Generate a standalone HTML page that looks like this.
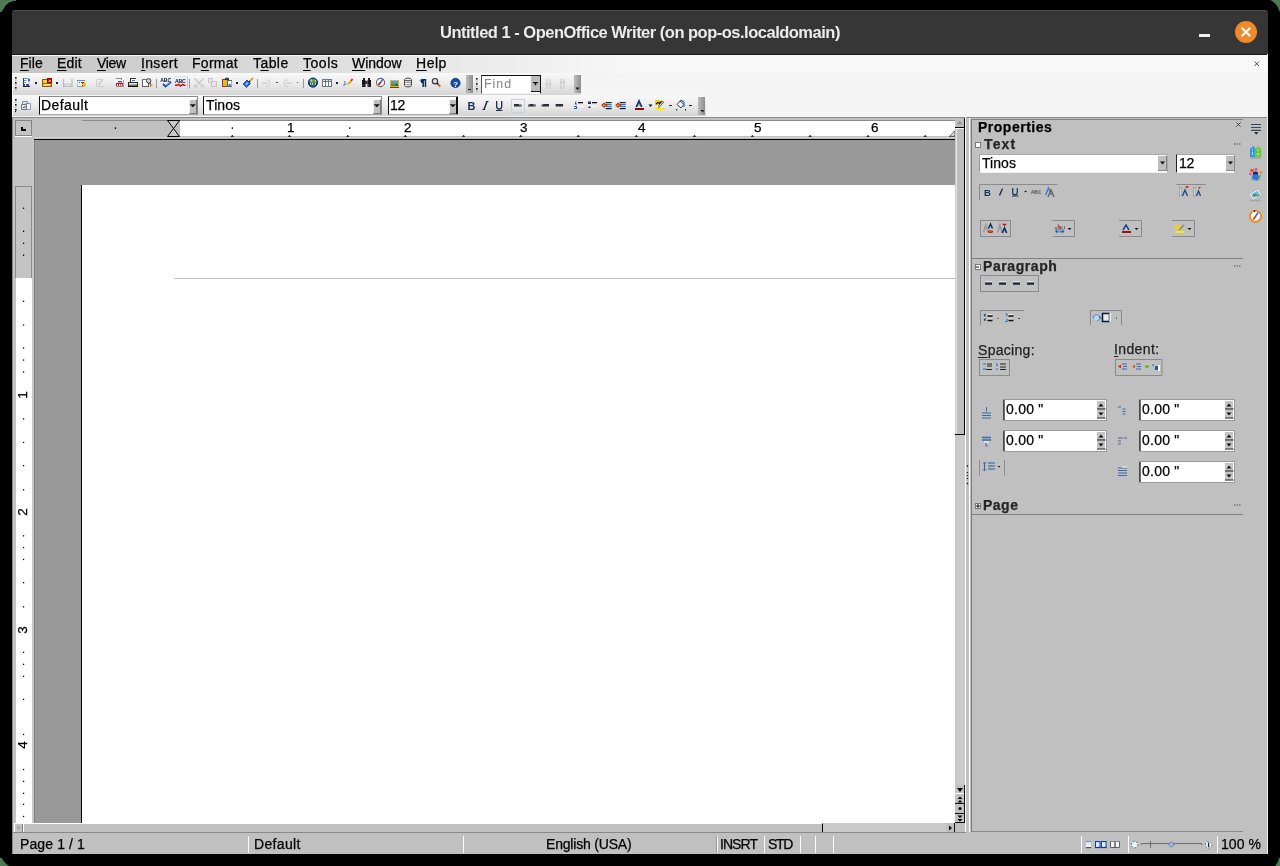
<!DOCTYPE html><html><head><meta charset="utf-8"><style>
*{margin:0;padding:0;box-sizing:border-box}
html,body{width:1280px;height:866px;overflow:hidden;background:#4f7c55;font-family:"Liberation Sans",sans-serif}
.abs{position:absolute}
.t{position:absolute;white-space:nowrap;line-height:1;color:#000;will-change:transform;-webkit-text-stroke:0.25px currentColor}
u{text-decoration:underline;text-underline-offset:2px;text-decoration-thickness:1px}
</style></head><body>
<div class="abs" style="left:0px;top:0px;width:1280px;height:866px;background:#000"></div>
<svg class="abs" style="left:0px;top:0px;" width="1280" height="866" viewBox="0 0 1280 866"><g fill="#4d7a52"><path d="M0 0H16V1H12V2H9.5L7.5 4L5.5 5.5L4.5 7.5L3.5 9L2.5 10.5L1.5 12H0Z"/><path d="M1270 0H1280V12L1278.5 9L1277.5 6.5L1276 4.5L1274 2.5L1272 1Z"/><path d="M0 858H2L3 860.5L5 862.5L7 864.5L9 866H0Z"/><path d="M1280 858V866H1275L1276.5 864L1278 861.5L1279 858Z"/></g></svg>
<div class="abs" style="left:12px;top:54px;width:1256px;height:800px;background:#c0c0c0"></div>
<div class="abs" style="left:12px;top:10px;width:1256px;height:45px;background:#363636;border-radius:3px 3px 0 0;border-top:1px solid #4c4c4c"></div>
<div class="abs" style="left:12px;top:54px;width:1256px;height:1px;background:#1c1c1c"></div>
<div class="t" style="left:439.50px;top:24.03px;font-size:16.5px;font-weight:bold;color:#ececec;letter-spacing:-0.500px;-webkit-text-stroke:0">Untitled 1 - OpenOffice Writer (on pop-os.localdomain)</div>
<div class="abs" style="left:1199px;top:34px;width:11px;height:3px;background:#f2f2f2"></div>
<div class="abs" style="left:1235px;top:21px;width:22px;height:22px;border-radius:50%;background:#ef8a2b"></div>
<svg class="abs" style="left:1235px;top:21px;" width="22" height="22" viewBox="0 0 22 22"><path d="M7.5 7.5L14.5 14.5M14.5 7.5L7.5 14.5" stroke="#f6f8fa" stroke-width="2.2" stroke-linecap="square"/></svg>
<div class="abs" style="left:12px;top:55px;width:1256px;height:18px;background:linear-gradient(90deg,#c4c4c4 0%,#f8f8f8 50%,#f8f8f8 100%);border-top:1px solid #fafafa"></div>
<div class="t" style="left:19.70px;top:56.15px;font-size:14px;color:#000;letter-spacing:0.033px;"><u>F</u>ile</div>
<div class="t" style="left:56.90px;top:56.15px;font-size:14px;color:#000;letter-spacing:0.133px;"><u>E</u>dit</div>
<div class="t" style="left:96.60px;top:56.15px;font-size:14px;color:#000;letter-spacing:-0.333px;"><u>V</u>iew</div>
<div class="t" style="left:140.80px;top:56.15px;font-size:14px;color:#000;letter-spacing:0.340px;"><u>I</u>nsert</div>
<div class="t" style="left:192.20px;top:56.15px;font-size:14px;color:#000;letter-spacing:0.280px;">F<u>o</u>rmat</div>
<div class="t" style="left:252.80px;top:56.15px;font-size:14px;color:#000;letter-spacing:0.425px;">T<u>a</u>ble</div>
<div class="t" style="left:302.50px;top:56.15px;font-size:14px;color:#000;letter-spacing:0.525px;"><u>T</u>ools</div>
<div class="t" style="left:351.60px;top:56.15px;font-size:14px;color:#000;letter-spacing:-0.040px;"><u>W</u>indow</div>
<div class="t" style="left:415.80px;top:56.15px;font-size:14px;color:#000;letter-spacing:0.533px;"><u>H</u>elp</div>
<svg class="abs" style="left:1253px;top:60px;" width="8" height="8" viewBox="0 0 8 8"><path d="M1.5 1.5L6 6M6 1.5L1.5 6" stroke="#3a3a3a" stroke-width=".9"/></svg>
<div class="abs" style="left:12px;top:73px;width:1256px;height:44px;background:#f4f4f4"></div>
<div class="abs" style="left:13px;top:73px;width:568px;height:22px;background:linear-gradient(#f9f9f9,#ececec 45%,#d4d4d4)"></div>
<div class="abs" style="left:13px;top:95px;width:693px;height:21px;background:linear-gradient(#f9f9f9,#ececec 45%,#d4d4d4)"></div>
<svg class="abs" style="left:14.8px;top:76.8px;" width="2" height="15" viewBox="0 0 2 15"><rect x="0" y="0" width="1.6" height="1.6" fill="#111"/><rect x="0.2" y="2.5" width="1.2" height="1.2" fill="#9a9a9a"/><rect x="0" y="5" width="1.6" height="1.6" fill="#111"/><rect x="0.2" y="7.5" width="1.2" height="1.2" fill="#9a9a9a"/><rect x="0" y="10" width="1.6" height="1.6" fill="#111"/><rect x="0.2" y="12.5" width="1.2" height="1.2" fill="#9a9a9a"/></svg>
<svg class="abs" style="left:14.8px;top:98.7px;" width="2" height="15" viewBox="0 0 2 15"><rect x="0" y="0" width="1.6" height="1.6" fill="#111"/><rect x="0.2" y="2.5" width="1.2" height="1.2" fill="#9a9a9a"/><rect x="0" y="5" width="1.6" height="1.6" fill="#111"/><rect x="0.2" y="7.5" width="1.2" height="1.2" fill="#9a9a9a"/><rect x="0" y="10" width="1.6" height="1.6" fill="#111"/><rect x="0.2" y="12.5" width="1.2" height="1.2" fill="#9a9a9a"/></svg>
<div class="abs" style="left:14.8px;top:110.7px;width:1.6px;height:1.6px;background:#111"></div>
<svg class="abs" style="left:475.8px;top:78px;" width="2" height="15" viewBox="0 0 2 15"><rect x="0" y="0" width="1.6" height="1.6" fill="#111"/><rect x="0.2" y="2.5" width="1.2" height="1.2" fill="#9a9a9a"/><rect x="0" y="5" width="1.6" height="1.6" fill="#111"/><rect x="0.2" y="7.5" width="1.2" height="1.2" fill="#9a9a9a"/><rect x="0" y="10" width="1.6" height="1.6" fill="#111"/><rect x="0.2" y="12.5" width="1.2" height="1.2" fill="#9a9a9a"/></svg>
<div class="abs" style="left:34.8px;top:82px;width:2.3px;height:1.5px;background:#222"></div>
<div class="abs" style="left:55.8px;top:82px;width:2.3px;height:1.5px;background:#222"></div>
<div class="abs" style="left:156px;top:79px;width:1px;height:9px;background:#9a9a9a"></div>
<div class="abs" style="left:189px;top:79px;width:1px;height:9px;background:#9a9a9a"></div>
<div class="abs" style="left:236px;top:82px;width:2.3px;height:1.5px;background:#222"></div>
<div class="abs" style="left:257px;top:79px;width:1px;height:9px;background:#9a9a9a"></div>
<div class="abs" style="left:276px;top:82px;width:2.2px;height:1.2px;background:#555"></div>
<div class="abs" style="left:297px;top:82px;width:1.2px;height:1.2px;background:#555"></div>
<div class="abs" style="left:303px;top:79px;width:1px;height:9px;background:#9a9a9a"></div>
<div class="abs" style="left:335.7px;top:82px;width:2.3px;height:1.5px;background:#222"></div>
<svg class="abs" style="left:0px;top:0px;pointer-events:none" width="1280" height="866" viewBox="0 0 1280 866"><rect x="23" y="78" width="5" height="9" fill="#fff"/><rect x="23" y="78" width="1" height="9" fill="#1a3f7a"/><rect x="23" y="86" width="7" height="1" fill="#2a2a2a"/><rect x="24" y="78" width="3" height="1" fill="#7a8aa0"/><rect x="27" y="78" width="2" height="1" fill="#8fa8c8"/><rect x="28" y="79" width="2" height="2" fill="#3a6aa8"/><rect x="29" y="81" width="1" height="5" fill="#d8d8d8"/><rect x="24" y="80" width="1" height="1" fill="#5a7ab0"/><rect x="25" y="80" width="2" height="1" fill="#9ab0d0"/><rect x="24" y="82" width="2" height="1" fill="#7a90b0"/><rect x="26" y="84" width="3" height="2" fill="#2a5a98"/><rect x="24" y="84" width="1" height="2" fill="#1a3f7a"/><rect x="28" y="81" width="1" height="1" fill="#6a8ac0"/><rect x="42" y="79" width="5" height="8" fill="#a84a10"/><rect x="43" y="80" width="4" height="6" fill="#f8d820"/><rect x="42" y="83" width="10" height="4" fill="#a84a10"/><rect x="43" y="84" width="8" height="2" fill="#f8c820"/><rect x="44" y="84" width="6" height="1" fill="#fff4b0"/><rect x="47" y="78" width="5" height="5" fill="#900010"/><rect x="48" y="79" width="3" height="3" fill="#c01818"/><rect x="48" y="81" width="3" height="1" fill="#f08020"/><rect x="49" y="80" width="2" height="1" fill="#f8a040"/><path d="M63.5 79v7.5h8.5V79" fill="none" stroke="#b8b8b8" stroke-width="1.2"/><path d="M65 84h5.5v2.5h-5.5z" fill="none" stroke="#c0c0c0" stroke-width=".9"/><rect x="77" y="80" width="8" height="1" fill="#6a88b0"/><rect x="77" y="81" width="7" height="5" fill="#f6f8fa"/><rect x="77" y="86" width="7" height="1" fill="#9aa4b0"/><rect x="77" y="81" width="1" height="5" fill="#b8c8e0"/><rect x="79" y="82" width="1" height="1" fill="#444"/><rect x="81" y="82" width="1" height="1" fill="#444"/><rect x="82" y="82" width="3" height="4" fill="#a04010"/><rect x="83" y="83" width="3" height="3" fill="#f8d020"/><rect x="84" y="82" width="1" height="5" fill="#e8b020"/><rect x="82" y="84" width="4" height="1" fill="#f8c010"/><path d="M96.5 79.5h5M96.5 86.5h8M96.5 80v6" stroke="#d0d0d0" fill="none"/><path d="M98 85l5-5.5" stroke="#c8c8c8" stroke-width="1.3"/><rect x="116" y="78" width="6" height="1" fill="#7a8a9a"/><rect x="116" y="79" width="7" height="4" fill="#f4f6f8"/><rect x="123" y="80" width="1" height="7" fill="#9aa0a8"/><rect x="121" y="79" width="1" height="1" fill="#f06020"/><rect x="118" y="81" width="4" height="1.5" fill="#1a6ad0"/><rect x="116" y="83" width="7" height="3" fill="#e80010"/><rect x="117" y="84" width="1" height="2" fill="#fff"/><rect x="119" y="84" width="1.3" height="2" fill="#fff"/><rect x="121.3" y="84" width="1" height="2" fill="#fff"/><rect x="116" y="86" width="8" height="1" fill="#8a9098"/><rect x="130" y="78" width="6" height="1" fill="#333"/><rect x="130" y="78" width="1" height="4" fill="#333"/><rect x="131" y="79" width="5" height="3" fill="#f4f8fc"/><rect x="132" y="80" width="3" height="1" fill="#2a70d0"/><rect x="136" y="82" width="2" height="1" fill="#444"/><rect x="128" y="82" width="10" height="5" fill="#2a2a2a"/><rect x="129" y="83" width="8" height="2.5" fill="#b0b0b0"/><rect x="129" y="83" width="8" height="1" fill="#e8e8e8"/><rect x="135" y="84" width="2" height="1" fill="#7ac040"/><rect x="128" y="86" width="10" height="1" fill="#111"/><rect x="142" y="79" width="1" height="8" fill="#5a5f68"/><rect x="142" y="86" width="7" height="1" fill="#5a5f68"/><rect x="142" y="79" width="5" height="1" fill="#6a7080"/><rect x="143" y="80" width="5" height="6" fill="#fafafa"/><rect x="148" y="82" width="1" height="5" fill="#5a5f68"/><circle cx="148.7" cy="80.8" r="2.2" fill="#c8dcf0" stroke="#333" stroke-width=".9"/><rect x="149.5" y="83" width="1.5" height="1.5" fill="#6a3010"/><rect x="150.5" y="84" width="2" height="2" fill="#e8b020"/><rect x="150" y="85.5" width="1" height="1" fill="#222"/><text x="160.3" y="81.9" font-size="5.2" font-weight="bold" fill="#0a1a38" font-family="Liberation Sans" letter-spacing="-.2">ABC</text><path d="M163 84l2.5 2.5 5.5-4.5" fill="none" stroke="#1a50b0" stroke-width="1.9"/><path d="M166 85.5l4.5-3.5" stroke="#60b0f0" stroke-width=".8"/><rect x="174.5" y="76.5" width="13" height="13" fill="none" stroke="#dde3ee"/><path d="M187.5 77v12" stroke="#b8c8e8"/><text x="175" y="82.9" font-size="5.2" font-weight="bold" fill="#0a1a38" font-family="Liberation Sans" letter-spacing="-.2">ABC</text><path d="M175 85.2h2l1.5-.8 2 1.6 2-1.6 1.5.8h1.5" fill="none" stroke="#e80808" stroke-width="1.6"/><path d="M194.5 78.5l6.5 6M203.5 78.5l-6 6" stroke="#c6c6c6" stroke-width="1.1"/><circle cx="195.5" cy="86" r="1.2" fill="none" stroke="#c0c0c0"/><circle cx="202.5" cy="86" r="1.2" fill="none" stroke="#c0c0c0"/><rect x="208" y="78" width="5" height="5" fill="#c8c8c8"/><rect x="209" y="79" width="3" height="3" fill="#e6e6e6"/><rect x="211" y="81" width="6" height="6" fill="#c4c4c4"/><rect x="212" y="82" width="4" height="4" fill="#e4e4e4"/><rect x="222" y="79" width="6" height="8" fill="#8a4010"/><rect x="223" y="80" width="4" height="6" fill="#f0b820"/><rect x="225" y="78" width="4" height="2" fill="#333"/><rect x="226" y="77.5" width="2" height="1" fill="#777"/><rect x="227" y="80" width="5" height="7" fill="#5a6470"/><rect x="228" y="81" width="3.5" height="5" fill="#f8f8f8"/><rect x="228.5" y="84" width="2" height="2" fill="#1a70d0"/><path d="M243 84l4-4 3.5 3.5-4 4z" fill="#2060d0" stroke="#0a3a90" stroke-width=".7"/><path d="M245 84l2-2 1.5 1.5-2 2z" fill="#80c0f8"/><path d="M249.5 81.5l3.5-3.5" stroke="#e09010" stroke-width="1.7"/><path d="M249 82l1-1" stroke="#222" stroke-width="1.2"/><path d="M262.5 83.2h5" stroke="#c8c8c8" stroke-width="1.2"/><path d="M266 80a3.3 3.3 0 1 1 0 6.5" fill="none" stroke="#c4c4c4" stroke-width="1.1" stroke-dasharray="1.3 .7"/><path d="M286.5 83.2h5" stroke="#c8c8c8" stroke-width="1.2"/><path d="M288 80a3.3 3.3 0 1 0 0 6.5" fill="none" stroke="#c4c4c4" stroke-width="1.1" stroke-dasharray="1.3 .7"/><circle cx="313" cy="82.6" r="4.6" fill="#1a6a9a" stroke="#0a2a5a" stroke-width="1"/><rect x="310" y="79.5" width="6" height="3" fill="#6ab83a"/><rect x="310.5" y="79.5" width="1.5" height="2" fill="#e8d020"/><rect x="313" y="79" width="1" height="3.5" fill="#3a8ad8"/><rect x="315" y="80" width="1" height="2" fill="#e8d020"/><rect x="309.5" y="83" width="7" height="2.2" fill="#111"/><rect x="310" y="83.2" width="1.5" height="1.5" fill="#fff"/><rect x="312" y="83.2" width="1.5" height="1.5" fill="#fff"/><rect x="314.5" y="83.2" width="1.5" height="1.5" fill="#fff"/><rect x="312.5" y="85.5" width="1" height="1" fill="#1a80e0"/><rect x="322" y="79" width="10" height="8" fill="#6a7888"/><rect x="323" y="80" width="2" height="1" fill="#dde4ec"/><rect x="326" y="80" width="2" height="1" fill="#dde4ec"/><rect x="329" y="80" width="2" height="1" fill="#dde4ec"/><rect x="323" y="82" width="2" height="4" fill="#fff"/><rect x="326" y="82" width="2" height="4" fill="#fff"/><rect x="329" y="82" width="2" height="4" fill="#fff"/><path d="M343.5 85.5l2-2M344 81.5l1.5 1" stroke="#2a7ad8" stroke-width="1.1"/><path d="M346 86l5.5-5.5" stroke="#f0d020" stroke-width="2"/><path d="M346 86.5l1.5-1.5" stroke="#e8e8e8" stroke-width="1.5"/><path d="M351 81l1.5-2" stroke="#e02010" stroke-width="1.8"/><path d="M349 83.5l1.5-1.5" stroke="#5a3010" stroke-width=".8"/><rect x="362" y="80" width="3.5" height="7" fill="#181818"/><rect x="367.5" y="80" width="3.5" height="7" fill="#181818"/><rect x="363" y="78" width="2" height="2" fill="#222"/><rect x="368" y="78" width="2" height="2" fill="#222"/><rect x="365" y="81" width="2.5" height="3" fill="#333"/><rect x="362.5" y="84.5" width="1" height="1.5" fill="#666"/><rect x="368" y="84.5" width="1" height="1.5" fill="#666"/><circle cx="380.5" cy="82.5" r="4.1" fill="#f8f8f8" stroke="#6a6a6a" stroke-width="1.1"/><path d="M378.3 85l2.6-3" stroke="#d01010" stroke-width="1.7"/><path d="M380.8 82l2.4-3" stroke="#2a60c0" stroke-width="1.3"/><rect x="390" y="80" width="9" height="8" fill="#e8b030"/><rect x="391" y="81" width="7" height="2.5" fill="#4aa0e8"/><rect x="391" y="83.5" width="7" height="2.5" fill="#3a9a2a"/><rect x="390" y="87" width="9" height="1" fill="#7a3a10"/><rect x="396" y="84" width="1.5" height="1.5" fill="#1a3a1a"/><path d="M404.5 79.5v6a3.5 1.4 0 0 0 7 0v-6" fill="#dcdcdc" stroke="#4a4a4a" stroke-width="1"/><ellipse cx="408" cy="79.5" rx="3.5" ry="1.3" fill="#f0f0f0" stroke="#4a4a4a" stroke-width="1"/><path d="M406 82v4" stroke="#fff" stroke-width="1.2"/><path d="M405 82.5h6M405 84.5h6" stroke="#8a8a8a" stroke-width=".6"/><path d="M421.5 79h4.7v8h-1.5v-6.5h-.8v6.5h-1.5v-3.8a2.4 2.4 0 0 1-.9-4.2z" fill="#0a2a5a"/><path d="M420 81a1.5 1.5 0 0 1 2-1.5" stroke="#3a6ac0" fill="none"/><circle cx="435" cy="81.2" r="2.7" fill="#c8e0f8" stroke="#333" stroke-width="1.1"/><path d="M437.3 83.5l3 3" stroke="#c87010" stroke-width="2"/><path d="M437 83.3l.8.8" stroke="#222" stroke-width="1.5"/><circle cx="455.5" cy="83" r="4.7" fill="#1a4e9e"/><circle cx="455.5" cy="83" r="4.7" fill="none" stroke="#0a2a6a" stroke-width=".6"/><text x="453.2" y="86.5" font-size="7.8" font-weight="bold" fill="#fff" font-family="Liberation Sans">?</text></svg>
<div class="abs" style="left:466px;top:75px;width:7px;height:18px;background:linear-gradient(90deg,#bdbdbd,#8e8e8e)"></div>
<div class="abs" style="left:468px;top:89px;width:3px;height:1.2px;background:#222"></div>
<div class="abs" style="left:481px;top:74.5px;width:60px;height:19px;background:#fff;border-top:1.5px solid #111;border-left:1px solid #555;border-right:1.3px solid #111;border-bottom:1px solid #f4f4f4"></div>
<div class="t" style="left:483.60px;top:77.59px;font-size:12.3px;color:#8a8a8a;letter-spacing:1.033px;-webkit-text-stroke:0.1px #8a8a8a">Find</div>
<div class="abs" style="left:531px;top:76px;width:9px;height:16px;background:#bcbcbc;border-bottom:1px solid #111"></div>
<svg class="abs" style="left:531px;top:80px;" width="9" height="7" viewBox="0 0 9 7"><path d="M2 2.6h5M4.5 2.6v2.6" stroke="#111" stroke-width="1.4"/></svg>
<svg class="abs" style="left:544px;top:77px;" width="24" height="14" viewBox="0 0 24 14"><path d="M3 2v10M6 2v10M1.5 7h6" stroke="#c8c8c8" stroke-width="1.1"/><path d="M17 2v10M20 2v10M15.5 5.5h6" stroke="#c8c8c8" stroke-width="1.1"/></svg>
<div class="abs" style="left:574px;top:75px;width:7px;height:18px;background:linear-gradient(90deg,#bdbdbd,#8e8e8e)"></div>
<svg class="abs" style="left:575px;top:87px;" width="5" height="4" viewBox="0 0 5 4"><path d="M0.5 0.5h4L2.5 3z" fill="#111"/></svg>
<div class="abs" style="left:38.6px;top:96px;width:159.4px;height:18.6px;background:#fff;border-top:1px solid #8a8a8a;border-left:1.4px solid #111;border-right:1px solid #8a8a8a;border-bottom:1px solid #a8a8a8"></div>
<div class="t" style="left:40.50px;top:98.15px;font-size:14px;color:#000;letter-spacing:0.417px;">Default</div>
<div class="abs" style="left:188.5px;top:99px;width:8.5px;height:15px;background:#c0c0c0;border-right:1px solid #7a7a7a;border-bottom:1px solid #7a7a7a;border-top:1px solid #f8f8f8;border-left:1px solid #f0f0f0"></div>
<svg class="abs" style="left:189px;top:103.5px;" width="8" height="4" viewBox="0 0 8 4"><path d="M1.2 0.6h5.2L4.2 2.8h-0.8z" fill="#111" stroke="#111" stroke-width=".5"/></svg>
<div class="abs" style="left:202.6px;top:96px;width:179.4px;height:18.6px;background:#fff;border-top:1px solid #8a8a8a;border-left:1.4px solid #111;border-right:1px solid #8a8a8a;border-bottom:1px solid #a8a8a8"></div>
<div class="t" style="left:206.00px;top:98.15px;font-size:14px;color:#000;letter-spacing:0.100px;">Tinos</div>
<div class="abs" style="left:372.5px;top:99px;width:8.5px;height:15px;background:#c0c0c0;border-right:1px solid #7a7a7a;border-bottom:1px solid #7a7a7a;border-top:1px solid #f8f8f8;border-left:1px solid #f0f0f0"></div>
<svg class="abs" style="left:373px;top:103.5px;" width="8" height="4" viewBox="0 0 8 4"><path d="M1.2 0.6h5.2L4.2 2.8h-0.8z" fill="#111" stroke="#111" stroke-width=".5"/></svg>
<div class="abs" style="left:387.6px;top:96px;width:70.4px;height:18.6px;background:#fff;border-top:1px solid #8a8a8a;border-left:1.4px solid #111;border-right:1px solid #8a8a8a;border-bottom:1px solid #a8a8a8"></div>
<div class="t" style="left:389.80px;top:98.15px;font-size:14px;color:#000;letter-spacing:-0.400px;">12</div>
<div class="abs" style="left:448.5px;top:99px;width:8.5px;height:15px;background:#c0c0c0;border-right:1px solid #7a7a7a;border-bottom:1px solid #7a7a7a;border-top:1px solid #f8f8f8;border-left:1px solid #f0f0f0"></div>
<svg class="abs" style="left:449px;top:103.5px;" width="8" height="4" viewBox="0 0 8 4"><path d="M1.2 0.6h5.2L4.2 2.8h-0.8z" fill="#111" stroke="#111" stroke-width=".5"/></svg>
<div class="abs" style="left:456px;top:97px;width:2px;height:17px;background:#111"></div>
<svg class="abs" style="left:648px;top:104px;" width="5" height="4" viewBox="0 0 5 4"><path d="M0.5 0.5h4L2.5 3z" fill="#111"/></svg>
<div class="abs" style="left:669.3px;top:104.5px;width:2.6px;height:1.5px;background:#222"></div>
<div class="abs" style="left:689.3px;top:104.5px;width:2.6px;height:1.5px;background:#222"></div>
<svg class="abs" style="left:0px;top:0px;pointer-events:none" width="1280" height="866" viewBox="0 0 1280 866"><path d="M22.5 101.5h5v4h-5z" fill="#e8ecf0" stroke="#7a8aa0"/><path d="M25.5 103.5h5v6h-5z" fill="#f4f6f8" stroke="#8a9ab0"/><path d="M21.5 104.5h5v5h-5z" fill="#e0e4ea" stroke="#6a7a90"/><path d="M23 107l1 1 1.5-2" fill="none" stroke="#333" stroke-width=".8"/><text x="467.5" y="109.6" font-size="11" font-weight="bold" fill="#1a3050" font-family="Liberation Sans">B</text><path d="M484 109.5l3-8" stroke="#1a3050" stroke-width="1.6"/><path d="M482.5 109.5h2.5M486 101.5h2.5" stroke="#1a3050" stroke-width="1"/><path d="M496.7 101v5.5a2.5 2.5 0 0 0 5 0v-5.5" fill="none" stroke="#1a3050" stroke-width="1.3"/><path d="M496 110.5h6.5" stroke="#1a3050" stroke-width="1"/><rect x="511.5" y="99.5" width="13" height="13" fill="none" stroke="#c4d0e4"/><rect x="514" y="104" width="7.5" height="2.5" fill="#2a2f38"/><rect x="528" y="104" width="7.5" height="2.5" fill="#2a2f38"/><rect x="541.5" y="104" width="7.5" height="2.5" fill="#2a2f38"/><rect x="555.6" y="104" width="7.5" height="2.5" fill="#2a2f38"/><path d="M519 104.8h2.5M528 104.8h1.5M533.5 104.8h1.5M541.5 104.8h1.5" stroke="#ececec" stroke-width=".9"/><rect x="575" y="102" width="1" height="2.5" fill="#2a5aa8"/><rect x="575.5" y="101.5" width="1" height="0.8" fill="#2a5aa8"/><rect x="576" y="103.5" width="1" height="1" fill="#2a5aa8"/><rect x="574" y="106" width="3" height="1" fill="#2a5aa8"/><rect x="576" y="106" width="1" height="2" fill="#2a5aa8"/><rect x="574" y="108" width="3" height="1" fill="#2a5aa8"/><rect x="578" y="102" width="5" height="1.3" fill="#111"/><rect x="578" y="106" width="5" height="1" fill="#f8f8f8"/><rect x="588" y="101.5" width="3" height="2.5" fill="#0a2a5a"/><rect x="589" y="102" width="1" height="1" fill="#4a7ac0"/><path d="M588 108l1.5-2 1.5 2z" fill="#0a2a5a"/><rect x="592" y="102" width="5" height="1.3" fill="#111"/><rect x="592" y="106" width="5" height="1" fill="#f8f8f8"/><rect x="605.7" y="102" width="6" height="1.2" fill="#222"/><rect x="606.7" y="104" width="5" height="1.2" fill="#2a7ad8"/><rect x="606.7" y="106" width="5" height="1.2" fill="#2a7ad8"/><rect x="605.7" y="108" width="6" height="1.2" fill="#0a1a38"/><path d="M601.7 105.2l2.5-2.2v1.2h2.5v2h-2.5v1.2z" fill="#e8a020" stroke="#a01010" stroke-width=".9"/><rect x="619.7" y="102" width="6" height="1.2" fill="#222"/><rect x="620.7" y="104" width="5" height="1.2" fill="#2a7ad8"/><rect x="620.7" y="106" width="5" height="1.2" fill="#2a7ad8"/><rect x="619.7" y="108" width="6" height="1.2" fill="#0a1a38"/><path d="M615.7 105.2l2.5-2.2v1.2h2.5v2h-2.5v1.2z" fill="#e8a020" stroke="#a01010" stroke-width=".9"/><path d="M636.3 107l2.7-6 2.7 6" fill="none" stroke="#0a2a5a" stroke-width="1.7"/><path d="M637.5 105h3" stroke="#3a7ac0" stroke-width="1"/><rect x="638" y="100" width="2" height="1.5" fill="#2a5aa8"/><rect x="635" y="108" width="9" height="2" fill="#8a0808"/><rect x="655" y="100" width="7" height="5" fill="#f8d010"/><path d="M656 104l2-1.5 1.5 1 2-2" stroke="#111" stroke-width="1.2" fill="none"/><path d="M659 106l4.5-4.5" stroke="#555" stroke-width="2"/><path d="M659.3 105.7l4-4" stroke="#eee" stroke-width=".9"/><path d="M658 107h2" stroke="#c04010" stroke-width="1"/><rect x="655" y="108" width="10" height="2" fill="#f8f000"/><path d="M677 104.5l3-3.5 4 3.5-3 3.5z" fill="#f0f0f0" stroke="#333" stroke-width=".9"/><path d="M679.5 101.5a2 2 0 0 1 2.5-1" fill="none" stroke="#333" stroke-width=".9"/><path d="M682 101a2 2 0 0 1 2 2v4" fill="none" stroke="#2a7ad8" stroke-width="1.3"/><rect x="676.2" y="109" width="1" height="1.5" fill="#111"/><rect x="685" y="109" width="1" height="1.5" fill="#111"/></svg>
<div class="abs" style="left:698px;top:97px;width:7px;height:18px;background:linear-gradient(90deg,#bdbdbd,#8e8e8e)"></div>
<svg class="abs" style="left:700px;top:110px;" width="4" height="3" viewBox="0 0 4 3"><path d="M0 0h3.5L3.5 2.5z" fill="#111"/></svg>
<div class="abs" style="left:12px;top:117px;width:953px;height:22px;background:#c0c0c0"></div>
<div class="abs" style="left:12px;top:117px;width:953px;height:1px;background:#8a8a8a"></div>
<div class="abs" style="left:12px;top:117px;width:1px;height:737px;background:#8a8a8a"></div>
<div class="abs" style="left:15px;top:120px;width:17px;height:16px;background:#c4c4c4;border:1px solid #858585"></div>
<div class="abs" style="left:15px;top:135.5px;width:17px;height:1.5px;background:#fff"></div>
<div class="abs" style="left:21px;top:127px;width:2px;height:3px;background:#000"></div>
<div class="abs" style="left:21px;top:129px;width:5px;height:1.5px;background:#000"></div>
<div class="abs" style="left:34px;top:120px;width:921px;height:16.5px;background:#c0c0c0"></div>
<div class="abs" style="left:34px;top:136.5px;width:921px;height:1.5px;background:#d0d0d0"></div>
<div class="abs" style="left:82px;top:120px;width:873px;height:1px;background:#8a8a8a"></div>
<div class="abs" style="left:180px;top:121px;width:775px;height:15px;background:#fff"></div>
<div class="abs" style="left:34px;top:139px;width:921px;height:1.2px;background:#000"></div>
<svg class="abs" style="left:0px;top:0px;pointer-events:none" width="1280" height="866" viewBox="0 0 1280 866"><path d="M230.5 136.8h3.6l-1.8-1.8z" fill="#000"/><path d="M287.7 136.8h3.6l-1.8-1.8z" fill="#000"/><path d="M346.0 136.8h3.6l-1.8-1.8z" fill="#000"/><path d="M403.6 136.8h3.6l-1.8-1.8z" fill="#000"/><path d="M461.8 136.8h3.6l-1.8-1.8z" fill="#000"/><path d="M519.0 136.8h3.6l-1.8-1.8z" fill="#000"/><path d="M576.4 136.8h3.6l-1.8-1.8z" fill="#000"/><path d="M634.6 136.8h3.6l-1.8-1.8z" fill="#000"/><path d="M692.7 136.8h3.6l-1.8-1.8z" fill="#000"/><path d="M750.6 136.8h3.6l-1.8-1.8z" fill="#000"/><path d="M808.3 136.8h3.6l-1.8-1.8z" fill="#000"/><path d="M866.2 136.8h3.6l-1.8-1.8z" fill="#000"/><path d="M923.4 136.8h3.6l-1.8-1.8z" fill="#000"/><rect x="114.8" y="127.3" width="1.3" height="1.6" fill="#000"/><rect x="231.7" y="127.3" width="1.3" height="1.6" fill="#000"/><rect x="349.1" y="127.3" width="1.3" height="1.6" fill="#000"/><path d="M167.5 120.5h12l-6 8 6 8h-12l6-8z" fill="#c8c8c8" stroke="#000" stroke-width="1"/><path d="M949.5 136.5h5.5v-6z" fill="#d0d0d0" stroke="#000" stroke-width=".9" stroke-dasharray="1.2 .8"/></svg>
<div class="t" style="left:286.60px;top:120.57px;font-size:13.5px;color:#000;letter-spacing:0.000px;">1</div>
<div class="t" style="left:404.00px;top:120.57px;font-size:13.5px;color:#000;letter-spacing:0.000px;">2</div>
<div class="t" style="left:520.00px;top:120.57px;font-size:13.5px;color:#000;letter-spacing:0.000px;">3</div>
<div class="t" style="left:637.90px;top:120.57px;font-size:13.5px;color:#000;letter-spacing:0.000px;">4</div>
<div class="t" style="left:754.00px;top:120.57px;font-size:13.5px;color:#000;letter-spacing:0.000px;">5</div>
<div class="t" style="left:871.30px;top:120.57px;font-size:13.5px;color:#000;letter-spacing:0.000px;">6</div>
<div class="abs" style="left:34px;top:139px;width:921px;height:684px;background:#999"></div>
<div class="abs" style="left:34px;top:139px;width:1px;height:684px;background:#808080"></div>
<div class="abs" style="left:34px;top:139px;width:921px;height:1.2px;background:#000"></div>
<div class="abs" style="left:81px;top:185px;width:874px;height:638px;background:#fff"></div>
<div class="abs" style="left:81px;top:185px;width:1.2px;height:638px;background:#000"></div>
<div class="abs" style="left:174px;top:278px;width:781px;height:1px;background:#c0c0c0"></div>
<div class="abs" style="left:13px;top:139px;width:21px;height:684px;background:#c4c4c4"></div>
<div class="abs" style="left:12px;top:139px;width:1px;height:684px;background:#8a8a8a"></div>
<div class="abs" style="left:15px;top:186px;width:17px;height:92px;background:#c4c4c4;border-top:1px solid #8a8a8a;border-left:1px solid #8a8a8a;border-right:1px solid #8a8a8a"></div>
<div class="abs" style="left:16px;top:278px;width:16px;height:545px;background:#fff"></div>
<div class="abs" style="left:32px;top:139px;width:2px;height:684px;background:#c8c8c8"></div>
<svg class="abs" style="left:0px;top:0px;pointer-events:none" width="1280" height="866" viewBox="0 0 1280 866"><rect x="22.9" y="207.6" width="1.3" height="1.3" fill="#000"/><rect x="22.9" y="230.7" width="1.3" height="1.3" fill="#000"/><rect x="22.9" y="242.7" width="1.3" height="1.3" fill="#000"/><rect x="22.9" y="254.6" width="1.3" height="1.3" fill="#000"/><rect x="22.9" y="300.7" width="1.3" height="1.3" fill="#000"/><rect x="22.9" y="324.4" width="1.3" height="1.3" fill="#000"/><rect x="22.9" y="347.4" width="1.3" height="1.3" fill="#000"/><rect x="22.9" y="359.4" width="1.3" height="1.3" fill="#000"/><rect x="22.9" y="371.4" width="1.3" height="1.3" fill="#000"/><rect x="22.9" y="418.2" width="1.3" height="1.3" fill="#000"/><rect x="22.9" y="441.8" width="1.3" height="1.3" fill="#000"/><rect x="22.9" y="465.0" width="1.3" height="1.3" fill="#000"/><rect x="22.9" y="489.2" width="1.3" height="1.3" fill="#000"/><rect x="22.9" y="535.2" width="1.3" height="1.3" fill="#000"/><rect x="22.9" y="546.9" width="1.3" height="1.3" fill="#000"/><rect x="22.9" y="558.8" width="1.3" height="1.3" fill="#000"/><rect x="22.9" y="582.0" width="1.3" height="1.3" fill="#000"/><rect x="22.9" y="606.2" width="1.3" height="1.3" fill="#000"/><rect x="22.9" y="651.7" width="1.3" height="1.3" fill="#000"/><rect x="22.9" y="663.7" width="1.3" height="1.3" fill="#000"/><rect x="22.9" y="675.7" width="1.3" height="1.3" fill="#000"/><rect x="22.9" y="698.7" width="1.3" height="1.3" fill="#000"/><rect x="22.9" y="733.8" width="1.3" height="1.3" fill="#000"/><rect x="22.9" y="768.9" width="1.3" height="1.3" fill="#000"/><rect x="22.9" y="780.8" width="1.3" height="1.3" fill="#000"/><rect x="22.9" y="792.7" width="1.3" height="1.3" fill="#000"/><rect x="22.9" y="803.7" width="1.3" height="1.3" fill="#000"/><rect x="22.9" y="815.8" width="1.3" height="1.3" fill="#000"/></svg>
<div class="t" style="left:15.5px;top:387.8px;width:14px;height:14px;font-size:13.5px;line-height:14px;text-align:center;transform:rotate(-90deg)">1</div>
<div class="t" style="left:15.5px;top:504.9px;width:14px;height:14px;font-size:13.5px;line-height:14px;text-align:center;transform:rotate(-90deg)">2</div>
<div class="t" style="left:15.5px;top:622.6px;width:14px;height:14px;font-size:13.5px;line-height:14px;text-align:center;transform:rotate(-90deg)">3</div>
<div class="t" style="left:15.5px;top:738.4px;width:14px;height:14px;font-size:13.5px;line-height:14px;text-align:center;transform:rotate(-90deg)">4</div>
<div class="abs" style="left:955px;top:117px;width:10px;height:706px;background:#cacaca"></div>
<div class="abs" style="left:955px;top:117px;width:10px;height:1px;background:#8a8a8a"></div>
<div class="abs" style="left:955.5px;top:118px;width:8.5px;height:9px;background:#c0c0c0"></div>
<svg class="abs" style="left:955px;top:118px;" width="9" height="9" viewBox="0 0 9 9"><path d="M2 6.3h5.5L4.75 3z" fill="#8e8e8e"/></svg>
<div class="abs" style="left:956px;top:129px;width:8px;height:305px;background:#bebebe;border-left:1px solid #e4e4e4"></div>
<div class="abs" style="left:964px;top:117.6px;width:1.2px;height:317.6px;background:#000"></div>
<div class="abs" style="left:955px;top:127px;width:9.5px;height:1.1px;background:#000"></div>
<div class="abs" style="left:955.5px;top:128.1px;width:8.5px;height:0.9px;background:#fafafa"></div>
<div class="abs" style="left:955px;top:434px;width:10px;height:1.2px;background:#000"></div>
<div class="abs" style="left:955px;top:785px;width:10px;height:38px;background:#c0c0c0;border-right:1px solid #111"></div>
<svg class="abs" style="left:955px;top:785px;" width="10" height="38" viewBox="0 0 10 38"><path d="M2 3h6L5 7z" fill="#000"/><path d="M0 8.5h9" stroke="#fff"/><path d="M2.5 14l2.5-2.5 2.5 2.5zM2.5 17.5l2.5-2.5 2.5 2.5z" fill="#000"/><path d="M0 18.5h9" stroke="#111"/><circle cx="5" cy="23.5" r="1.5" fill="#000"/><path d="M0 28.5h9" stroke="#111"/><path d="M2.5 30.5l2.5 2.5 2.5-2.5zM2.5 34l2.5 2.5 2.5-2.5z" fill="#000"/><path d="M0 37.5h10" stroke="#111"/></svg>
<div class="abs" style="left:13px;top:823px;width:942px;height:10px;background:#cacaca"></div>
<div class="abs" style="left:22px;top:823px;width:801px;height:9.5px;background:#c0c0c0;border-top:1px solid #fff;border-right:1.2px solid #000"></div>
<div class="abs" style="left:14px;top:823px;width:8px;height:9px;background:#c4c4c4;border-top:1px solid #fff;border-left:1px solid #fff"></div>
<svg class="abs" style="left:14px;top:823px;" width="8" height="9" viewBox="0 0 8 9"><path d="M5.5 2l-3 2.5 3 2.5z" fill="#9a9a9a"/></svg>
<div class="abs" style="left:946px;top:823px;width:9px;height:10px;background:#c0c0c0;border-right:1px solid #111;border-bottom:1px solid #111"></div>
<div class="abs" style="left:22px;top:824px;width:1px;height:8.5px;background:#7a7a7a"></div>
<div class="abs" style="left:23px;top:824px;width:1px;height:8.5px;background:#fff"></div>
<svg class="abs" style="left:946px;top:823px;" width="9" height="10" viewBox="0 0 9 10"><path d="M3 2.5l3 2.5-3 2.5z" fill="#000"/></svg>
<div class="abs" style="left:955px;top:823px;width:10px;height:10px;background:#c0c0c0"></div>
<div class="abs" style="left:13px;top:832px;width:942px;height:1px;background:#808080"></div>
<div class="abs" style="left:13px;top:833px;width:1255px;height:21px;background:#c0c0c0"></div>
<div class="abs" style="left:13px;top:832px;width:953px;height:1px;background:#888"></div>
<div class="abs" style="left:248px;top:836px;width:1.2px;height:16.5px;background:#fafafa"></div>
<div class="abs" style="left:463px;top:836px;width:1.2px;height:16.5px;background:#fafafa"></div>
<div class="abs" style="left:717px;top:836px;width:1.2px;height:16.5px;background:#fafafa"></div>
<div class="abs" style="left:764px;top:836px;width:1.2px;height:16.5px;background:#fafafa"></div>
<div class="abs" style="left:800px;top:836px;width:1.2px;height:16.5px;background:#fafafa"></div>
<div class="abs" style="left:815px;top:836px;width:1.2px;height:16.5px;background:#fafafa"></div>
<div class="abs" style="left:833px;top:836px;width:1.2px;height:16.5px;background:#fafafa"></div>
<div class="abs" style="left:1080.5px;top:836px;width:1.2px;height:16.5px;background:#fafafa"></div>
<div class="abs" style="left:1128px;top:836px;width:1.2px;height:16.5px;background:#fafafa"></div>
<div class="abs" style="left:1217px;top:836px;width:1.2px;height:16.5px;background:#fafafa"></div>
<div class="abs" style="left:716px;top:836px;width:1px;height:16.5px;background:#999"></div>
<div class="t" style="left:19.50px;top:837.15px;font-size:14px;color:#000;letter-spacing:0.111px;">Page 1 / 1</div>
<div class="t" style="left:253.70px;top:837.15px;font-size:14px;color:#000;letter-spacing:0.350px;">Default</div>
<div class="t" style="left:545.90px;top:837.15px;font-size:14px;color:#000;letter-spacing:-0.192px;">English (USA)</div>
<div class="t" style="left:720.25px;top:837.15px;font-size:14px;color:#000;letter-spacing:-0.950px;">INSRT</div>
<div class="t" style="left:767.75px;top:837.15px;font-size:14px;color:#000;letter-spacing:-1.300px;">STD</div>
<div class="t" style="left:1221.30px;top:837.15px;font-size:14px;color:#000;letter-spacing:0.075px;">100 %</div>
<svg class="abs" style="left:0px;top:0px;pointer-events:none" width="1280" height="866" viewBox="0 0 1280 866"><defs><linearGradient id="pg" x1="0" y1="0" x2="0" y2="1"><stop offset="0" stop-color="#c8dcf4"/><stop offset="1" stop-color="#ffffff"/></linearGradient></defs><rect x="1086" y="841.5" width="5" height="6" fill="url(#pg)"/><rect x="1086" y="841" width="5" height="1" fill="#7a90b0"/><rect x="1086" y="847" width="5" height="1.2" fill="#505050"/><rect x="1095.5" y="841.5" width="4.5" height="6" fill="url(#pg)" stroke="#0a40a0" stroke-width="1"/><rect x="1095" y="846.8" width="5.5" height="1.3" fill="#0a3a90"/><rect x="1101.5" y="841.5" width="4.5" height="6" fill="url(#pg)" stroke="#0a40a0" stroke-width="1"/><rect x="1101" y="846.8" width="5.5" height="1.3" fill="#0a3a90"/><path d="M1110.5 847.5v-6h4.5v6zM1115 847.5v-6h4.5v6z" fill="#f6f8fa" stroke="#5a5f68" stroke-width="1"/><path d="M1110.5 841.5h9" stroke="#7a8aa0"/><circle cx="1134.6" cy="844.6" r="3.2" fill="#e8f4fc" stroke="#555" stroke-width=".8" stroke-dasharray="2 1.2"/><path d="M1141.3 845v-1.4h60.5v1.4" fill="none" stroke="#6a6a6a" stroke-width="1"/><path d="M1150.5 841v6.8" stroke="#6a6a6a" stroke-width="1"/><circle cx="1171.4" cy="844.5" r="2.5" fill="#90b8f0" stroke="#4a5a70" stroke-width=".7" stroke-dasharray="1.5 .8"/><circle cx="1208.6" cy="844.8" r="3.2" fill="#fafafa" stroke="#555" stroke-width=".8" stroke-dasharray="2 1.2"/><path d="M1208.6 842.5v4.6" stroke="#0a2a5a" stroke-width="1.4"/></svg>
<div class="abs" style="left:965px;top:117px;width:6px;height:715px;background:#c0c0c0"></div>
<div class="abs" style="left:969px;top:117px;width:1px;height:715px;background:#fff"></div>
<div class="abs" style="left:965px;top:117px;width:1px;height:715px;background:#fff"></div>
<svg class="abs" style="left:966px;top:465px;" width="3" height="20" viewBox="0 0 3 20"><path d="M1 0.5l1 1M1.5 7v1M1.5 10v1M1.5 13v1M1 18l1 1" stroke="#111" stroke-width="1.3"/></svg>
<div class="abs" style="left:966px;top:117px;width:302px;height:1px;background:#8a8a8a"></div>
<div class="abs" style="left:970.6px;top:119px;width:272.4px;height:713px;background:#c0c0c0;border-left:1.5px solid #7a7a7a;border-top:1.3px solid #808080"></div>
<div class="abs" style="left:971px;top:831px;width:272px;height:1.2px;background:#888"></div>
<div class="t" style="left:977.60px;top:120.15px;font-size:14px;font-weight:bold;color:#000;letter-spacing:0.511px;">Properties</div>
<svg class="abs" style="left:1235px;top:121px;" width="7" height="7" viewBox="0 0 7 7"><path d="M1.3 1.3l4.4 4.4M5.7 1.3l-4.4 4.4" stroke="#3a3a3a" stroke-width=".9"/></svg>
<div class="t" style="left:984.40px;top:136.65px;font-size:14px;font-weight:bold;color:#262626;letter-spacing:1.133px;">Text</div>
<svg class="abs" style="left:1234px;top:142.5px;" width="7" height="3" viewBox="0 0 7 3"><path d="M0 1h1.2M2.6 1h1.2M5.2 1h1.2" stroke="#333" stroke-width="1"/></svg>
<svg class="abs" style="left:975px;top:141.5px;" width="6" height="6" viewBox="0 0 6 6"><rect x=".5" y=".5" width="5" height="5" fill="#fff" stroke="#777"/></svg>
<div class="abs" style="left:979px;top:154px;width:189px;height:18.5px;background:#fff;border:1px solid #a8a8a8;border-left:1px solid #9a9a9a;border-bottom:1px solid #eee"></div>
<div class="t" style="left:981.90px;top:156.15px;font-size:14px;color:#000;letter-spacing:0.050px;">Tinos</div>
<div class="abs" style="left:1158px;top:156px;width:9px;height:15px;background:#bebebe;border-right:1px solid #888;border-bottom:1px solid #888"></div>
<svg class="abs" style="left:1159px;top:161px;" width="7" height="4" viewBox="0 0 7 4"><path d="M1 0.5h5L3.5 3.5z" fill="#111"/></svg>
<div class="abs" style="left:1176px;top:154px;width:59px;height:18.5px;background:#fff;border:1px solid #a8a8a8;border-left:1px solid #222;border-bottom:1px solid #eee"></div>
<div class="t" style="left:1178.60px;top:156.15px;font-size:14px;color:#000;letter-spacing:-0.300px;">12</div>
<div class="abs" style="left:1225.5px;top:156px;width:9px;height:15px;background:#bebebe;border-right:1px solid #888;border-bottom:1px solid #888"></div>
<svg class="abs" style="left:1226.5px;top:161px;" width="7" height="4" viewBox="0 0 7 4"><path d="M1 0.5h5L3.5 3.5z" fill="#111"/></svg>
<svg class="abs" style="left:0px;top:0px;pointer-events:none" width="1280" height="866" viewBox="0 0 1280 866"><path d="M979.5 200V184.5H1057.5" fill="none" stroke="#8a8a8a" stroke-width="1"/><text x="984" y="195.5" font-size="9.5" font-weight="bold" fill="#1a3050" font-family="Liberation Sans">B</text><path d="M999.5 195.5l3-7" stroke="#1a3050" stroke-width="1.4"/><path d="M1012.7 188v4.5a2.3 2.3 0 0 0 4.6 0v-4.5" fill="none" stroke="#1a3050" stroke-width="1.2"/><path d="M1012 196h6.5" stroke="#1a3050"/><path d="M1024.5 191.5h2.2" stroke="#222" stroke-width="1.2"/><text x="1031" y="194" font-size="5" fill="#444" font-family="Liberation Sans">ABC</text><path d="M1031 192h9" stroke="#666" stroke-width=".6"/><path d="M1045.5 195l3-7 3 7" fill="none" stroke="#4a7ac0" stroke-width="1.5"/><path d="M1048 197l3-7 3 7" fill="none" stroke="#6a6a6a" stroke-width="1.5"/><path d="M1176.5 184.5H1206" stroke="#8a8a8a"/><rect x="1179.5" y="187.5" width="1.6" height="8.5" fill="#e8e8e8" stroke="#888" stroke-width=".6"/><path d="M1182.5 196l2.5-6 2.5 6" fill="none" stroke="#1a4a8a" stroke-width="1.4"/><path d="M1185 187l2-1.2 2 1.2-2 1.2z" fill="#d02010"/><rect x="1193.5" y="187.5" width="1.6" height="8.5" fill="#e8e8e8" stroke="#888" stroke-width=".6"/><path d="M1196.5 196l2-5 2 5" fill="none" stroke="#1a4a8a" stroke-width="1.3"/><path d="M1198 187h3l-1.5 2z" fill="#d02010"/><rect x="980.5" y="220.5" width="30" height="16" fill="none" stroke="#8a8a8a"/><path d="M983.5 232.5l2.3-7.5 2.3 7.5" fill="none" stroke="#9a9a9a" stroke-width="1.6"/><path d="M988.5 228.5l2-4.5 2 4.5" fill="none" stroke="#0a2a6a" stroke-width="1.5"/><ellipse cx="990.5" cy="231.5" rx="2.6" ry="1.5" fill="#c01808"/><path d="M989 231h3" stroke="#f0c020" stroke-width=".8"/><path d="M997.5 232.5l2.3-7.5 2.3 7.5" fill="none" stroke="#9a9a9a" stroke-width="1.6"/><path d="M1002 223.8h5l-2.5 2.5z" fill="#c01808"/><path d="M1002.3 233l2.2-5 2.2 5" fill="none" stroke="#0a2a6a" stroke-width="1.6"/><text x="1054.5" y="229.5" font-size="5.5" font-weight="bold" fill="#666" font-family="Liberation Sans">aVU</text><path d="M1058 224.5l3 5" stroke="#e01010" stroke-width="1"/><path d="M1056 231.5h7" stroke="#1a5ab8" stroke-width="1.6"/><path d="M1055 231.5l2-1.8v3.6zM1064.5 231.5l-2-1.8v3.6z" fill="#1a5ab8"/><path d="M1057.5 231.3h4" stroke="#8ac8f8" stroke-width=".7"/><path d="M1052.5 220.5h22v16h-22" fill="none" stroke="#8a8a8a"/><path d="M1067.5 228h4l-2 2z" fill="#111"/><path d="M1119 220.5h22.5v16h-22.5" fill="none" stroke="#8a8a8a"/><path d="M1123 230l3-5 3 5" fill="none" stroke="#1a4a8a" stroke-width="1.5"/><rect x="1122" y="231" width="9" height="2" fill="#a01010"/><path d="M1134.5 228h4l-2 2z" fill="#111"/><path d="M1172 220.5h22.5v16h-22.5" fill="none" stroke="#8a8a8a"/><rect x="1175" y="225" width="6" height="4" fill="#f0d020"/><path d="M1179 230l5-5" stroke="#888" stroke-width="1.5"/><rect x="1175" y="231" width="9" height="2" fill="#f8f000"/><path d="M1187.5 228h4l-2 2z" fill="#111"/><path d="M971 258.5H1243" stroke="#808080" stroke-width="1.2"/><rect x="980.5" y="275.5" width="58" height="16" fill="none" stroke="#8a8a8a"/><path d="M995.5 277v13" stroke="#a8c0e8" stroke-dasharray="1 4"/><path d="M983 276.5h8" stroke="#a8c0e8" stroke-dasharray="1 1"/><rect x="985" y="282.5" width="7" height="2.3" fill="#1e2a3a"/><path d="M985 281.5h7" stroke="#eaeaea" stroke-width=".8"/><rect x="999" y="282.5" width="7" height="2.3" fill="#1e2a3a"/><path d="M999 281.5h7" stroke="#eaeaea" stroke-width=".8"/><rect x="1013" y="282.5" width="7" height="2.3" fill="#1e2a3a"/><path d="M1013 281.5h7" stroke="#eaeaea" stroke-width=".8"/><rect x="1027" y="282.5" width="7" height="2.3" fill="#1e2a3a"/><path d="M1027 281.5h7" stroke="#eaeaea" stroke-width=".8"/><path d="M980.5 325V310.5H1024" fill="none" stroke="#8a8a8a"/><path d="M985.5 314l-1.2 1.2 1.2 1.2M985.5 318.5l-1.2 1.2 1.2 1.2" stroke="#1a3a7a" fill="none" stroke-width="1.1"/><path d="M987.5 314.5h4.5M987.5 319h4.5" stroke="#f4f4f4" stroke-width=".8"/><path d="M987.5 316h5M987.5 320.5h5" stroke="#111" stroke-width="1.3"/><path d="M997.5 318l1 1" stroke="#222"/><path d="M1005.5 313.8h1.5v2.5M1005 321.5h2.2V319" stroke="#2a6ac8" fill="none" stroke-width="1"/><path d="M1008.5 314.5h4.5M1008.5 319h4.5" stroke="#f4f4f4" stroke-width=".8"/><path d="M1008.5 316h5M1008.5 320.5h5" stroke="#111" stroke-width="1.3"/><path d="M1018.5 318.5h1.5" stroke="#222"/><path d="M1090.5 325V310.5h31V325" fill="none" stroke="#8a8a8a"/><path d="M1093.5 318.5a3.2 3.2 0 1 1 3.5 2.5" fill="#b8d8f8" stroke="#4a8ad8" stroke-width="1"/><path d="M1099.5 316.5l1.5 2" stroke="#222" stroke-width=".9"/><rect x="1102.5" y="313.5" width="7" height="8" fill="#e8e8e8" stroke="#0a1a38" stroke-width="1.5"/><path d="M1110.3 313v9" stroke="#fff" stroke-width=".9"/><path d="M1116 318h1" stroke="#222"/><path d="M1110 313v9" stroke="#fff"/></svg>
<div class="t" style="left:983.40px;top:259.15px;font-size:14px;font-weight:bold;color:#262626;letter-spacing:0.575px;">Paragraph</div>
<svg class="abs" style="left:1234px;top:265px;" width="7" height="3" viewBox="0 0 7 3"><path d="M0 1h1.2M2.6 1h1.2M5.2 1h1.2" stroke="#333" stroke-width="1"/></svg>
<svg class="abs" style="left:975px;top:264px;" width="6" height="6" viewBox="0 0 6 6"><rect x=".5" y=".5" width="5" height="5" fill="#fff" stroke="#777"/><path d="M1 3h3" stroke="#111"/></svg>
<div class="t" style="left:978.20px;top:342.65px;font-size:14px;color:#222;letter-spacing:0.300px;"><u>S</u>pacing:</div>
<div class="t" style="left:1114.20px;top:342.15px;font-size:14px;color:#222;letter-spacing:0.367px;"><u>I</u>ndent:</div>
<svg class="abs" style="left:0px;top:0px;pointer-events:none" width="1280" height="866" viewBox="0 0 1280 866"><rect x="979.5" y="359.5" width="30" height="16" fill="none" stroke="#8a8a8a"/><path d="M983 364h3M983 369h3" stroke="#2a6ac8"/><path d="M987 364h5M987 366h5M986 369.5h6" stroke="#222" stroke-width="1.2"/><path d="M996 363l2 2 -2 1M996 369h2" stroke="#2a6ac8" fill="none"/><path d="M1000 364h6M1000 367h6M1000 369.5h6" stroke="#222" stroke-width="1.2"/><path d="M1115.5 359.5h46.5v16h-46.5z" fill="none" stroke="#8a8a8a"/><path d="M1122 364h5M1123 366.5h4M1122 369h5" stroke="#2a6ac8" stroke-width="1"/><path d="M1118 366.5l3-2v4z" fill="#e02010"/><path d="M1136 364h5M1137 366.5h4M1136 369h5" stroke="#2a6ac8" stroke-width="1"/><path d="M1132 366.5l3-2v4z" fill="#e85010"/><path d="M1145 366.5h4" stroke="#4ab820" stroke-width="2"/><path d="M1152 365h2" stroke="#2a5aa8"/><rect x="1155" y="366" width="3" height="4" fill="#2a5aa8"/><rect x="1158" y="365" width="2" height="6" fill="#fff"/><rect x="1003.5" y="399.5" width="103" height="21" fill="#fff" stroke="#9a9a9a"/><path d="M1004 400V420" stroke="#111" stroke-width="1.2"/><rect x="1097" y="401" width="8" height="8" fill="#c4c4c4"/><rect x="1097" y="409.5" width="8" height="8" fill="#c4c4c4"/><path d="M1097 409h8.5M1097 418h8.5" stroke="#111" stroke-width="1"/><path d="M1098.5 406.5h5L1101 403.5z M1098.5 412.5h5L1101 415.5z" fill="#111"/><rect x="1003.5" y="430.5" width="103" height="21" fill="#fff" stroke="#9a9a9a"/><path d="M1004 431V451" stroke="#111" stroke-width="1.2"/><rect x="1097" y="432" width="8" height="8" fill="#c4c4c4"/><rect x="1097" y="440.5" width="8" height="8" fill="#c4c4c4"/><path d="M1097 440h8.5M1097 449h8.5" stroke="#111" stroke-width="1"/><path d="M1098.5 437.5h5L1101 434.5z M1098.5 443.5h5L1101 446.5z" fill="#111"/><rect x="1139.5" y="399.5" width="95" height="21" fill="#fff" stroke="#9a9a9a"/><path d="M1140 400V420" stroke="#111" stroke-width="1.2"/><rect x="1225" y="401" width="8" height="8" fill="#c4c4c4"/><rect x="1225" y="409.5" width="8" height="8" fill="#c4c4c4"/><path d="M1225 409h8.5M1225 418h8.5" stroke="#111" stroke-width="1"/><path d="M1226.5 406.5h5L1229 403.5z M1226.5 412.5h5L1229 415.5z" fill="#111"/><rect x="1139.5" y="430.5" width="95" height="21" fill="#fff" stroke="#9a9a9a"/><path d="M1140 431V451" stroke="#111" stroke-width="1.2"/><rect x="1225" y="432" width="8" height="8" fill="#c4c4c4"/><rect x="1225" y="440.5" width="8" height="8" fill="#c4c4c4"/><path d="M1225 440h8.5M1225 449h8.5" stroke="#111" stroke-width="1"/><path d="M1226.5 437.5h5L1229 434.5z M1226.5 443.5h5L1229 446.5z" fill="#111"/><rect x="1139.5" y="461.5" width="95" height="21" fill="#fff" stroke="#9a9a9a"/><path d="M1140 462V482" stroke="#111" stroke-width="1.2"/><rect x="1225" y="463" width="8" height="8" fill="#c4c4c4"/><rect x="1225" y="471.5" width="8" height="8" fill="#c4c4c4"/><path d="M1225 471h8.5M1225 480h8.5" stroke="#111" stroke-width="1"/><path d="M1226.5 468.5h5L1229 465.5z M1226.5 474.5h5L1229 477.5z" fill="#111"/><path d="M982 413h9M982 415.5h9M982 418h9" stroke="#3a68a8" stroke-width="1"/><path d="M986.5 407v4.5" stroke="#3a68a8"/><path d="M982 437.5h9M982 440h9" stroke="#3a68a8" stroke-width="1.5"/><path d="M984 442h5" stroke="#fff"/><path d="M986 443v3h1.5" stroke="#3a68a8" fill="none"/><path d="M1118 407h3M1122.5 409h3M1122.5 411.5h3M1122.5 414h3" stroke="#3a68a8" stroke-width="1"/><path d="M1118 438h5M1118 441h3M1118 444h3M1124 438h3" stroke="#3a68a8" stroke-width="1"/><path d="M1118 468h9M1118 470.5h9M1118 473h9M1118 475.5h9" stroke="#3a68a8" stroke-width="1"/><path d="M1122 467h5" stroke="#fff"/><path d="M979.5 475.5V460M1004.5 475.5V460" stroke="#8a8a8a"/><path d="M984.5 462.5v8" stroke="#3a68a8" stroke-width="1.2"/><path d="M983 463.5l1.5-1.5 1.5 1.5M983 469.5l1.5 1.5 1.5-1.5" fill="none" stroke="#3a68a8"/><path d="M988 463h7M988 466h7M988 469h7" stroke="#2a5a98" stroke-width="1"/><path d="M997.5 466h3l-1.5 1.5z" fill="#111"/><path d="M971 514.5H1243" stroke="#808080" stroke-width="1.2"/></svg>
<div class="t" style="left:1006.00px;top:402.15px;font-size:14px;color:#000;letter-spacing:0.240px;">0.00 "</div>
<div class="t" style="left:1006.00px;top:433.15px;font-size:14px;color:#000;letter-spacing:0.240px;">0.00 "</div>
<div class="t" style="left:1141.50px;top:402.15px;font-size:14px;color:#000;letter-spacing:0.240px;">0.00 "</div>
<div class="t" style="left:1141.50px;top:432.65px;font-size:14px;color:#000;letter-spacing:0.240px;">0.00 "</div>
<div class="t" style="left:1141.50px;top:463.85px;font-size:14px;color:#000;letter-spacing:0.240px;">0.00 "</div>
<div class="t" style="left:983.40px;top:498.15px;font-size:14px;font-weight:bold;color:#262626;letter-spacing:0.500px;">Page</div>
<svg class="abs" style="left:1234px;top:504px;" width="7" height="3" viewBox="0 0 7 3"><path d="M0 1h1.2M2.6 1h1.2M5.2 1h1.2" stroke="#333" stroke-width="1"/></svg>
<svg class="abs" style="left:975px;top:503px;" width="6" height="6" viewBox="0 0 6 6"><rect x=".5" y=".5" width="5" height="5" fill="#fff" stroke="#777"/><path d="M1 3h4M3 1v4" stroke="#111"/></svg>
<svg class="abs" style="left:0px;top:0px;pointer-events:none" width="1280" height="866" viewBox="0 0 1280 866"><path d="M1251 124.5h10M1251 127.5h10M1251 130.3h10" stroke="#3a4858" stroke-width="1.2"/><path d="M1254 132.3h4.5l-2.25 2.2z" fill="#111"/><ellipse cx="1255.5" cy="157.8" rx="5.5" ry="1.2" fill="#a8a8a8"/><path d="M1250 148h2v-1.5h2.5v1.5h1v9h-5.5z" fill="#2a98f0"/><path d="M1255.5 148h1.5v-1.5h2.5v1.5h1.8v9h-5.8z" fill="#6ed030"/><path d="M1252.5 149v6M1258 150v5" stroke="#fff" stroke-width=".7"/><path d="M1251 151h3M1256.5 152h3" stroke="#1a5a9a" stroke-width=".6"/><ellipse cx="1255.5" cy="179.8" rx="5" ry="1" fill="#a8a8a8"/><circle cx="1252" cy="170.5" r="1.8" fill="#e85020"/><circle cx="1256" cy="169.3" r="1.6" fill="#e050c0"/><path d="M1259.5 166.5l1.2 3h-2.4z" fill="#f0c020"/><circle cx="1250.5" cy="174" r="1.4" fill="#f050a0"/><path d="M1251.5 178.5l2-6 4.5 1.5 1.5 4.5-3 2z" fill="#2a7ad8"/><path d="M1253 172.5a3 2.5 0 0 1 5 0v2h-5z" fill="#1a3050"/><path d="M1258 176l3-1-1 3z" fill="#50b030"/><circle cx="1261" cy="172.5" r="1.2" fill="#f08020"/><ellipse cx="1255.5" cy="200.5" rx="5.5" ry="1" fill="#a8a8a8"/><path d="M1249 194l9-5 4 6-9 5z" fill="#fafafa" stroke="#8a9aa8" stroke-width=".6"/><path d="M1251 194.3l6.5-3.6 2.6 4-6.5 3.6z" fill="#6ab8f0"/><path d="M1252.5 196.5l3-2 2 1.5 2-1" stroke="#40b030" stroke-width="1.2" fill="none"/><circle cx="1254.5" cy="195" r=".8" fill="#e02020"/><circle cx="1255.5" cy="216.3" r="5.6" fill="#fafafa" stroke="#f08a20" stroke-width="1.8"/><path d="M1253.3 219.5l2.5-3.5" stroke="#e02020" stroke-width="1.6"/><path d="M1255.8 216l2.3-3.6" stroke="#2a70d0" stroke-width="1.6"/><path d="M1254.5 210v2" stroke="#333" stroke-width="1.4"/></svg>
<div class="abs" style="left:1267px;top:54px;width:1px;height:800px;background:#f0f0f0"></div>
</body></html>
